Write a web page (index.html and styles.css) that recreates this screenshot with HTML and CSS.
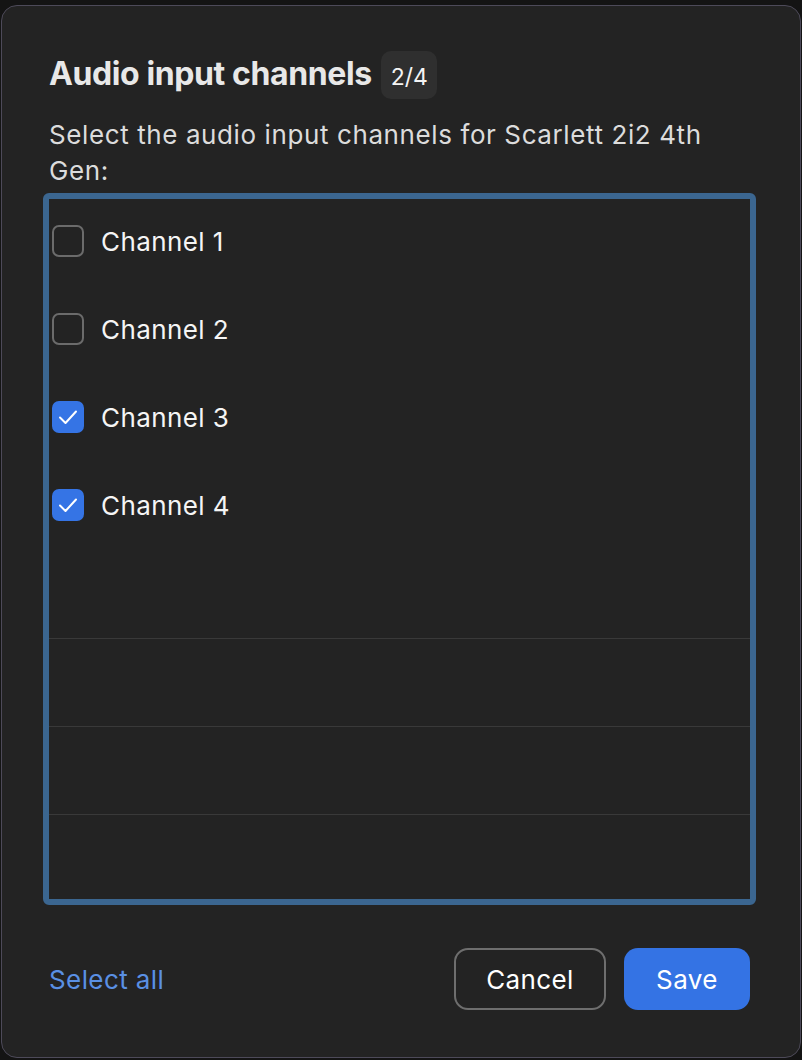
FILE: index.html
```html
<!DOCTYPE html>
<html lang="en">

<head>
    <meta charset="UTF-8" />
    <meta name="viewport" content="width=device-width, initial-scale=1.0" />
    <title>Audio input channels</title>
    <link rel="stylesheet" href="styles.css">
</head>

<body>
    <div class="dialog">
        <div class="dialog-head">
            <h2>Audio input channels</h2>
            <span class="count">2/4</span>
        </div>
        <p class="hint">Select the audio input channels for Scarlett 2i2 4th Gen:</p>

        <div class="channel-box">
            <div class="channel-list">
                <label class="row">
                    <span class="check"></span>
                    <span>Channel 1</span>
                </label>
                <label class="row">
                    <span class="check"></span>
                    <span>Channel 2</span>
                </label>
                <label class="row">
                    <span class="check on">
                        <svg viewBox="0 0 32 32" width="32" height="32"><polyline points="8,16.5 13.5,22 24,10.5" /></svg>
                    </span>
                    <span>Channel 3</span>
                </label>
                <label class="row">
                    <span class="check on">
                        <svg viewBox="0 0 32 32" width="32" height="32"><polyline points="8,16.5 13.5,22 24,10.5" /></svg>
                    </span>
                    <span>Channel 4</span>
                </label>
                <div class="row empty"></div>
                <div class="row empty"></div>
                <div class="row empty"></div>
                <div class="row empty"></div>
            </div>
        </div>

        <div class="dialog-foot">
            <a class="select-all" href="#">Select all</a>
            <div class="buttons">
                <button class="btn cancel">Cancel</button>
                <button class="btn save">Save</button>
            </div>
        </div>
    </div>
</body>

</html>
```

FILE: styles.css
```css
html,
body {
    margin: 0;
    height: 100%;
    background-color: #141414;
}

body {
    font-family: Inter, "Liberation Sans", sans-serif;
    padding: 5px 1px 2px 1px;
    box-sizing: border-box;
}

.dialog {
    height: 100%;
    box-sizing: border-box;
    background-color: #232323;
    border: 1px solid #4d4a59;
    border-radius: 16px;
    padding: 42px 50px 0 47px;
    color: #f2f2f2;
}

.dialog-head {
    display: flex;
    align-items: center;
    gap: 9px;
}

h2 {
    margin: 0;
    font-size: 32px;
    font-weight: 700;
    color: #e8e8e8;
    letter-spacing: -0.4px;
}

.count {
    background-color: #2f2f2f;
    border-radius: 10px;
    padding: 0 9px 0 10px;
    height: 48px;
    line-height: 53px;
    font-size: 23px;
    color: #f4f4f4;
    margin-top: 3px;
}

.hint {
    margin: 18px 0 4px;
    font-size: 26px;
    line-height: 36px;
    letter-spacing: 0.6px;
    color: #dcdcdc;
}

/* focus ring round the list */
.channel-box {
    margin: 0 -6px;
    border: 6px solid #3b6690;
    border-radius: 6px;
    height: 712px;
    box-sizing: border-box;
    overflow: hidden;
}

.row {
    display: flex;
    align-items: center;
    gap: 17px;
    height: 88px;
    box-sizing: border-box;
    padding: 0 0 4px 3px;
    font-size: 26px;
    letter-spacing: 0.4px;
    color: #f5f5f5;
}

.row.empty {
    border-bottom: 1.5px solid #393939;
}

.check {
    width: 32px;
    height: 32px;
    box-sizing: border-box;
    border: 2px solid #6b6b6b;
    border-radius: 7px;
    flex-shrink: 0;
}

.check.on {
    border: none;
    background-color: #3574e5;
}

.check svg {
    display: block;
    fill: none;
    stroke: white;
    stroke-width: 2;
    stroke-linecap: round;
    stroke-linejoin: round;
}

.dialog-foot {
    display: flex;
    align-items: center;
    justify-content: space-between;
    margin-top: 43px;
}

.select-all {
    font-size: 26px;
    letter-spacing: 0.4px;
    color: #5a90e4;
    text-decoration: none;
}

.buttons {
    display: flex;
    gap: 18px;
}

.btn {
    height: 62px;
    border-radius: 14px;
    font-family: inherit;
    font-size: 26px;
    letter-spacing: 0.4px;
    color: #ffffff;
    cursor: pointer;
}

.cancel {
    width: 152px;
    background-color: transparent;
    border: 2px solid #6e6e6e;
}

.save {
    width: 126px;
    background-color: #3473e4;
    border: none;
}
```
